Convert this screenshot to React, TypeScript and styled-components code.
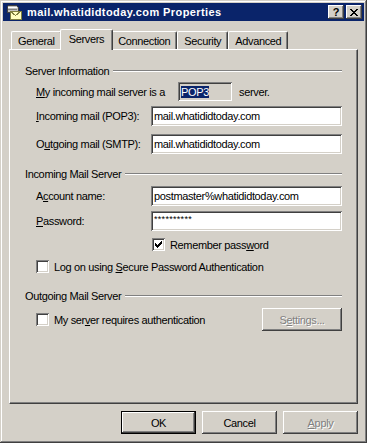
import React from 'react';
import styled, { createGlobalStyle } from 'styled-components';

const Global = createGlobalStyle`
    html, body {
        margin: 0;
        padding: 0;
        background: #d4d0c8;
    }
    body {
        font-family: Tahoma, "Liberation Sans", Arial, sans-serif;
        font-size: 11px;
        letter-spacing: -0.35px;
        color: #000;
    }
`

const raised = `
    box-shadow: inset -1px -1px #404040, inset 1px 1px #ffffff, inset -2px -2px #808080, inset 2px 2px #d4d0c8;
`
const sunken = `
    box-shadow: inset 1px 1px #808080, inset -1px -1px #ffffff, inset 2px 2px #404040, inset -2px -2px #d4d0c8;
`

const Window = styled.div`
    width: 367px;
    height: 443px;
    box-sizing: border-box;
    padding: 3px;
    background: #d4d0c8;
    display: flex;
    flex-direction: column;
    box-shadow: inset -1px -1px #404040, inset 1px 1px #d4d0c8, inset -2px -2px #808080, inset 2px 2px #ffffff;
`

const TitleBar = styled.div`
    height: 18px;
    background: #0a246a;
    display: flex;
    align-items: center;
    padding: 0 2px 0 3px;
    gap: 5px;
`

const TitleText = styled.div`
    flex: 1;
    color: #fff;
    font-weight: bold;
    font-size: 11px;
    letter-spacing: 0.4px;
    white-space: nowrap;
`

const CaptionButtons = styled.div`
    display: flex;
    gap: 2px;
`

const CaptionButton = styled.div`
    width: 16px;
    height: 14px;
    box-sizing: border-box;
    background: #d4d0c8;
    ${raised}
    display: flex;
    align-items: center;
    justify-content: center;
    font-weight: bold;
    font-size: 11px;
    line-height: 14px;
    letter-spacing: 0;
`

const Body = styled.div`
    flex: 1;
    display: flex;
    flex-direction: column;
    padding: 8px 6px 0 6px;
`

const TabStrip = styled.div`
    height: 20px;
    display: flex;
    align-items: flex-end;
    padding-left: 2px;
    position: relative;
    z-index: 1;
`

const Tab = styled.div<{ $active?: boolean }>`
    box-sizing: border-box;
    height: ${p => (p.$active ? '21px' : '18px')};
    margin: ${p => (p.$active ? '0 -2px -1px -2px' : '0')};
    padding: ${p => (p.$active ? '0 8px 2px 8px' : '1px 6px 0 6px')};
    background: #d4d0c8;
    border-top: 1px solid #fff;
    border-left: 1px solid #fff;
    border-right: 1px solid #404040;
    border-radius: 2px 2px 0 0;
    box-shadow: inset -1px 0 #808080;
    display: flex;
    align-items: center;
    white-space: nowrap;
    position: relative;
    z-index: ${p => (p.$active ? 2 : 0)};
`

const Panel = styled.div`
    height: 355px;
    box-sizing: border-box;
    border-top: 1px solid #fff;
    border-left: 1px solid #fff;
    border-right: 1px solid #404040;
    border-bottom: 1px solid #404040;
    box-shadow: inset -1px -1px #808080;
    padding: 14px 15px 0 15px;
    display: flex;
    flex-direction: column;
`

const GroupHeader = styled.div<{ $top?: number }>`
    height: 13px;
    margin-top: ${p => p.$top ?? 0}px;
    display: flex;
    align-items: center;
    gap: 4px;
    white-space: nowrap;
`

const Etch = styled.div`
    flex: 1;
    height: 0;
    border-top: 1px solid #808080;
    border-bottom: 1px solid #fff;
`

const Row = styled.div<{ $top: number; $h?: number; $indent?: number }>`
    margin-top: ${p => p.$top}px;
    height: ${p => p.$h ?? 20}px;
    padding-left: ${p => p.$indent ?? 11}px;
    display: flex;
    align-items: center;
    white-space: nowrap;
`

const Label = styled.div<{ $w: number }>`
    width: ${p => p.$w}px;
    flex-shrink: 0;
`

const Text = styled.span`
    white-space: pre;
`

const Field = styled.div<{ $w?: number; $blank?: boolean }>`
    ${p => (p.$w ? `width: ${p.$w}px;` : 'flex: 1;')}
    height: 100%;
    box-sizing: border-box;
    background: ${p => (p.$blank ? '#d4d0c8' : '#fff')};
    ${sunken}
    padding: 0 3px;
    display: flex;
    align-items: center;
    overflow: hidden;
`

const Selected = styled.span`
    background: #0a246a;
    color: #fff;
`

const Masked = styled.span`
    font-size: 9px;
    letter-spacing: 0.3px;
    margin-top: -4px;
`

const After = styled.span`
    margin-left: 7px;
`

const Check = styled.div`
    width: 13px;
    height: 13px;
    box-sizing: border-box;
    background: #fff;
    ${sunken}
    flex-shrink: 0;
    margin-right: 5px;
    position: relative;
`

const CheckMark = styled.svg`
    position: absolute;
    left: 3px;
    top: 3px;
`

const Button = styled.div<{ $w?: number; $default?: boolean; $disabled?: boolean }>`
    width: ${p => p.$w ?? 75}px;
    height: 23px;
    box-sizing: border-box;
    background: #d4d0c8;
    display: flex;
    align-items: center;
    justify-content: center;
    color: ${p => (p.$disabled ? '#808080' : '#000')};
    text-shadow: ${p => (p.$disabled ? '1px 1px 0 #fff' : 'none')};
    box-shadow: ${p =>
        p.$default
            ? 'inset 0 0 0 1px #000, inset -2px -2px #404040, inset 2px 2px #fff, inset -3px -3px #808080'
            : 'inset -1px -1px #404040, inset 1px 1px #fff, inset -2px -2px #808080'};
`

const Spacer = styled.div`
    flex: 1;
`

const ButtonRow = styled.div`
    margin-top: 7px;
    display: flex;
    justify-content: flex-end;
    gap: 6px;
`

const MailIcon = () => (
    <svg width="16" height="16" viewBox="0 0 16 16" shapeRendering="crispEdges">
        <path d="M1 3 L3 1 L10 1 L12 3 L12 8 L1 8 Z" fill="#c0c0c0" stroke="#404040" strokeWidth="1" />
        <rect x="2" y="3" width="9" height="1" fill="#fff" />
        <rect x="2" y="5" width="9" height="1" fill="#808080" />
        <rect x="4" y="7" width="11" height="8" fill="#ffffc0" stroke="#808040" strokeWidth="1" />
        <path d="M4.5 7.5 L9.5 11.5 L14.5 7.5" fill="none" stroke="#808040" strokeWidth="1" />
    </svg>
)

const CloseGlyph = () => (
    <svg width="8" height="7" viewBox="0 0 8 7" shapeRendering="crispEdges">
        <path d="M0 0h2v1h-2zM6 0h2v1h-2zM1 1h2v1h-2zM5 1h2v1h-2zM2 2h4v1h-4zM3 3h2v1h-2zM2 4h4v1h-4zM1 5h2v1h-2zM5 5h2v1h-2zM0 6h2v1h-2zM6 6h2v1h-2z" fill="#000" />
    </svg>
)

const Tick = () => (
    <CheckMark width="7" height="7" viewBox="0 0 7 7" shapeRendering="crispEdges">
        <path d="M6 0h1v1h-1zM5 1h2v1h-2zM0 2h1v1h-1zM4 2h3v1h-3zM0 3h2v1h-2zM3 3h3v1h-3zM0 4h5v1h-5zM1 5h3v1h-3zM2 6h1v1h-1z" fill="#000" />
    </CheckMark>
)

const tabs = ['General', 'Servers', 'Connection', 'Security', 'Advanced']

const App = () => {
    return (
        <>
            <Global />
            <Window>
                <TitleBar>
                    <MailIcon />
                    <TitleText>mail.whatididtoday.com Properties</TitleText>
                    <CaptionButtons>
                        <CaptionButton>?</CaptionButton>
                        <CaptionButton><CloseGlyph /></CaptionButton>
                    </CaptionButtons>
                </TitleBar>
                <Body>
                    <TabStrip>
                        {tabs.map((t) => <Tab key={t} $active={t === 'Servers'}>{t}</Tab>)}
                    </TabStrip>
                    <Panel>
                        <GroupHeader>Server Information<Etch /></GroupHeader>
                        <Row $top={5} $h={19}>
                            <Label $w={142}><u>M</u>y incoming mail server is a</Label>
                            <Field $w={54} $blank><Selected>POP3</Selected></Field>
                            <After>server.</After>
                        </Row>
                        <Row $top={5}>
                            <Label $w={115}><u>I</u>ncoming mail (POP3):</Label>
                            <Field>mail.whatididtoday.com</Field>
                        </Row>
                        <Row $top={8}>
                            <Label $w={115}>O<u>u</u>tgoing mail (SMTP):</Label>
                            <Field>mail.whatididtoday.com</Field>
                        </Row>

                        <GroupHeader $top={13}>Incoming Mail Server<Etch /></GroupHeader>
                        <Row $top={6}>
                            <Label $w={115}>A<u>c</u>count name:</Label>
                            <Field>postmaster%whatididtoday.com</Field>
                        </Row>
                        <Row $top={5}>
                            <Label $w={115}><u>P</u>assword:</Label>
                            <Field><Masked>**********</Masked></Field>
                        </Row>
                        <Row $top={7} $h={13} $indent={127}>
                            <Check><Tick /></Check>
                            <Text>Remember pass<u>w</u>ord</Text>
                        </Row>
                        <Row $top={9} $h={13}>
                            <Check />
                            <Text>Log on using <u>S</u>ecure Password Authentication</Text>
                        </Row>

                        <GroupHeader $top={16}>Outgoing Mail Server<Etch /></GroupHeader>
                        <Row $top={6} $h={23}>
                            <Check />
                            <Text>My ser<u>v</u>er requires authentication</Text>
                            <Spacer />
                            <Button $w={80} $disabled>S<u>e</u>ttings...</Button>
                        </Row>
                    </Panel>
                    <ButtonRow>
                        <Button $default>OK</Button>
                        <Button>Cancel</Button>
                        <Button $disabled><u>A</u>pply</Button>
                    </ButtonRow>
                </Body>
            </Window>
        </>
    )
}

export default App;
